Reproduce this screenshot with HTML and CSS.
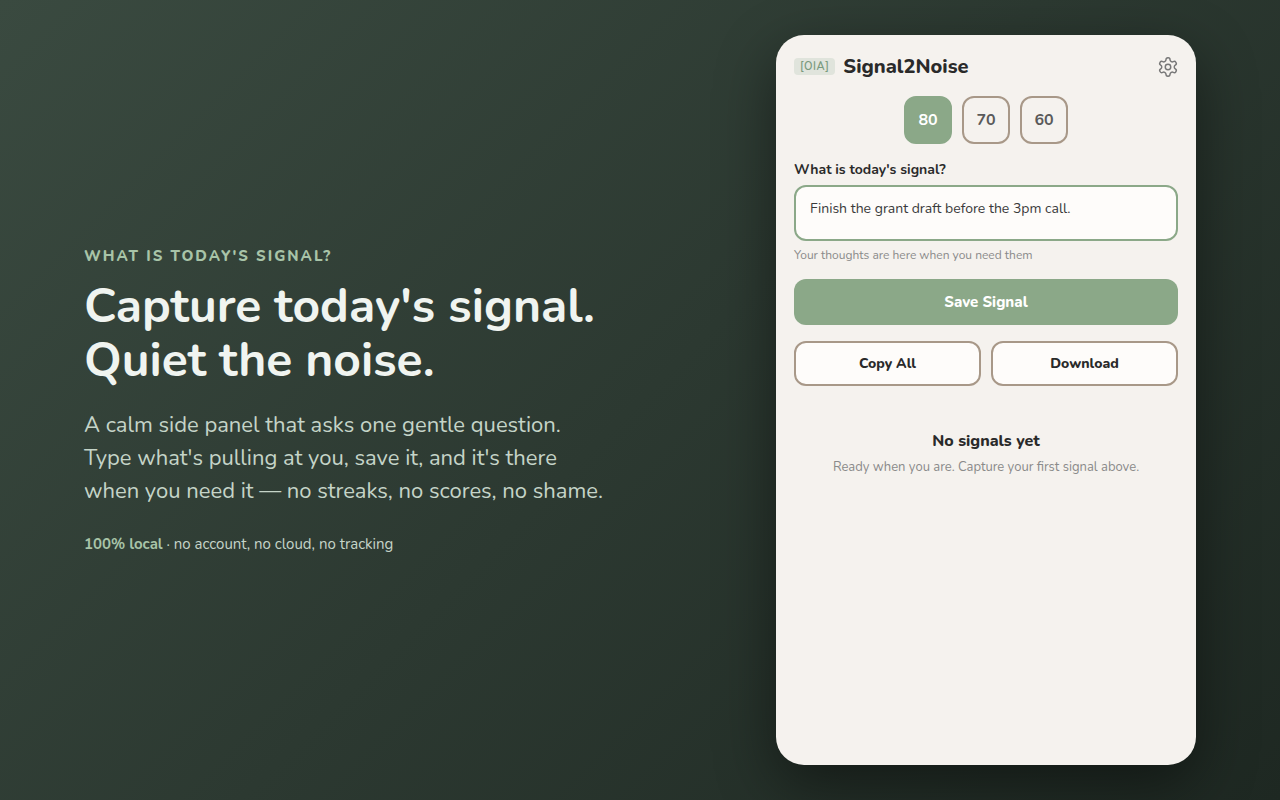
FILE: index.html
```html
<!DOCTYPE html>
<html lang="en">
<head>
<meta charset="utf-8">
<title>Signal2Noise</title>
<link rel="stylesheet" href="styles.css">
</head>
<body>
<main class="stage">
  <section class="hero">
    <p class="eyebrow">WHAT IS TODAY'S SIGNAL?</p>
    <h1 class="headline">Capture today's signal.<br>Quiet the noise.</h1>
    <p class="lede">A calm side panel that asks one gentle question.<br>Type what's pulling at you, save it, and it's there<br>when you need it — no streaks, no scores, no shame.</p>
    <p class="fine"><strong class="fine-strong">100% local</strong> · no account, no cloud, no tracking</p>
  </section>
  <aside class="panel">
    <header class="panel-head">
      <span class="tag">[OIA]</span>
      <span class="brand">Signal2Noise</span>
      <svg class="gear" viewBox="0 0 24 24" width="22" height="22" fill="none" stroke="currentColor" stroke-width="1.6" stroke-linecap="round" stroke-linejoin="round" aria-hidden="true">
        <path d="M12.22 2h-.44a2 2 0 0 0-2 2v.18a2 2 0 0 1-1 1.73l-.43.25a2 2 0 0 1-2 0l-.15-.08a2 2 0 0 0-2.73.73l-.22.38a2 2 0 0 0 .73 2.73l.15.1a2 2 0 0 1 1 1.72v.51a2 2 0 0 1-1 1.74l-.15.09a2 2 0 0 0-.73 2.73l.22.38a2 2 0 0 0 2.73.73l.15-.08a2 2 0 0 1 2 0l.43.25a2 2 0 0 1 1 1.73V20a2 2 0 0 0 2 2h.44a2 2 0 0 0 2-2v-.18a2 2 0 0 1 1-1.73l.43-.25a2 2 0 0 1 2 0l.15.08a2 2 0 0 0 2.73-.73l.22-.39a2 2 0 0 0-.73-2.73l-.15-.08a2 2 0 0 1-1-1.74v-.5a2 2 0 0 1 1-1.74l.15-.09a2 2 0 0 0 .73-2.73l-.22-.38a2 2 0 0 0-2.73-.73l-.15.08a2 2 0 0 1-2 0l-.43-.25a2 2 0 0 1-1-1.73V4a2 2 0 0 0-2-2z"/>
        <circle cx="12" cy="12" r="3"/>
      </svg>
    </header>
    <div class="scores">
      <button class="score score-on">80</button>
      <button class="score">70</button>
      <button class="score">60</button>
    </div>
    <label class="field-label" for="signal">What is today's signal?</label>
    <div class="field" id="signal">Finish the grant draft before the 3pm call.</div>
    <p class="hint">Your thoughts are here when you need them</p>
    <button class="save">Save Signal</button>
    <div class="actions">
      <button class="action">Copy All</button>
      <button class="action">Download</button>
    </div>
    <div class="empty">
      <h2 class="empty-title">No signals yet</h2>
      <p class="empty-text">Ready when you are. Capture your first signal above.</p>
    </div>
  </aside>
</main>
</body>
</html>
```
FILE: styles.css
```css
* { box-sizing: border-box; }
html, body { margin: 0; height: 100%; }
body {
  font-family: "Nunito", "Lato", "Open Sans", sans-serif;
  background: linear-gradient(135deg, #3a4a40 0%, #1e2822 100%);
  overflow: hidden;
}
.stage {
  height: 800px;
  display: flex;
  align-items: center;
  justify-content: space-between;
  padding: 0 84px;
}
.hero { width: 560px; padding-bottom: 1px; }
.eyebrow {
  margin: 0 0 13px;
  font-size: 15px;
  font-weight: 800;
  letter-spacing: 2px;
  line-height: 20px;
  color: #a8c4a8;
}
.headline {
  margin: 0 0 22px;
  font-size: 48px;
  line-height: 54px;
  font-weight: 700;
  color: #f0f4f0;
}
.lede {
  margin: 0 0 26px;
  font-size: 22px;
  line-height: 33px;
  color: #c5d4c8;
}
.fine {
  margin: 0;
  font-size: 15px;
  line-height: 20px;
  color: #c5d4c8;
}
.fine-strong { color: #a8c4a8; font-weight: 700; }
.panel {
  width: 420px;
  height: 730px;
  padding: 18px;
  border-radius: 28px;
  background: #f5f2ee;
  box-shadow: 0 20px 60px rgba(0, 0, 0, .45);
  display: flex;
  flex-direction: column;
}
.panel-head { display: flex; align-items: center; gap: 8px; height: 26px; }
.tag {
  padding: 0 6px;
  border-radius: 4px;
  background: #e0e4dc;
  color: #7a9a7e;
  font-size: 11px;
  font-weight: 600;
  letter-spacing: .5px;
  line-height: 17px;
}
.brand { font-size: 20px; font-weight: 800; color: #2a2a2a; }
.gear { margin: 2px -1px 0 auto; color: #777; }
.scores { display: flex; justify-content: center; gap: 10px; margin-top: 17px; }
.score {
  width: 48px;
  height: 48px;
  border: 2px solid #a89888;
  border-radius: 12px;
  background: transparent;
  color: #5a5a5a;
  font: 700 16px "Nunito", "Lato", sans-serif;
}
.score-on { background: #8ba888; border-color: #8ba888; color: #fff; }
.field-label { margin-top: 16px; font-size: 14px; font-weight: 700; line-height: 19px; color: #2a2a2a; }
.field {
  margin-top: 6px;
  height: 56px;
  padding: 12px 14px;
  border: 2px solid #8ba888;
  border-radius: 12px;
  background: #fefcfa;
  color: #3a3a3a;
  font-size: 14px;
  line-height: 19px;
}
.hint { margin: 6px 0 0; font-size: 12px; line-height: 16px; color: #8a8a8a; }
.save {
  margin-top: 16px;
  height: 46px;
  border: 0;
  border-radius: 12px;
  background: #8ba888;
  color: #fff;
  font: 800 15px "Nunito", "Lato", sans-serif;
}
.actions { display: flex; gap: 10px; margin-top: 16px; }
.action {
  flex: 1;
  height: 45px;
  border: 2px solid #a89888;
  border-radius: 12px;
  background: #fefcfa;
  color: #2a2a2a;
  font: 800 14px "Nunito", "Lato", sans-serif;
}
.empty { margin-top: 44px; text-align: center; }
.empty-title { margin: 0; font-size: 16px; line-height: 22px; font-weight: 800; color: #2a2a2a; }
.empty-text { margin: 6px 0 0; font-size: 13px; line-height: 18px; color: #8a8a8a; }
```
